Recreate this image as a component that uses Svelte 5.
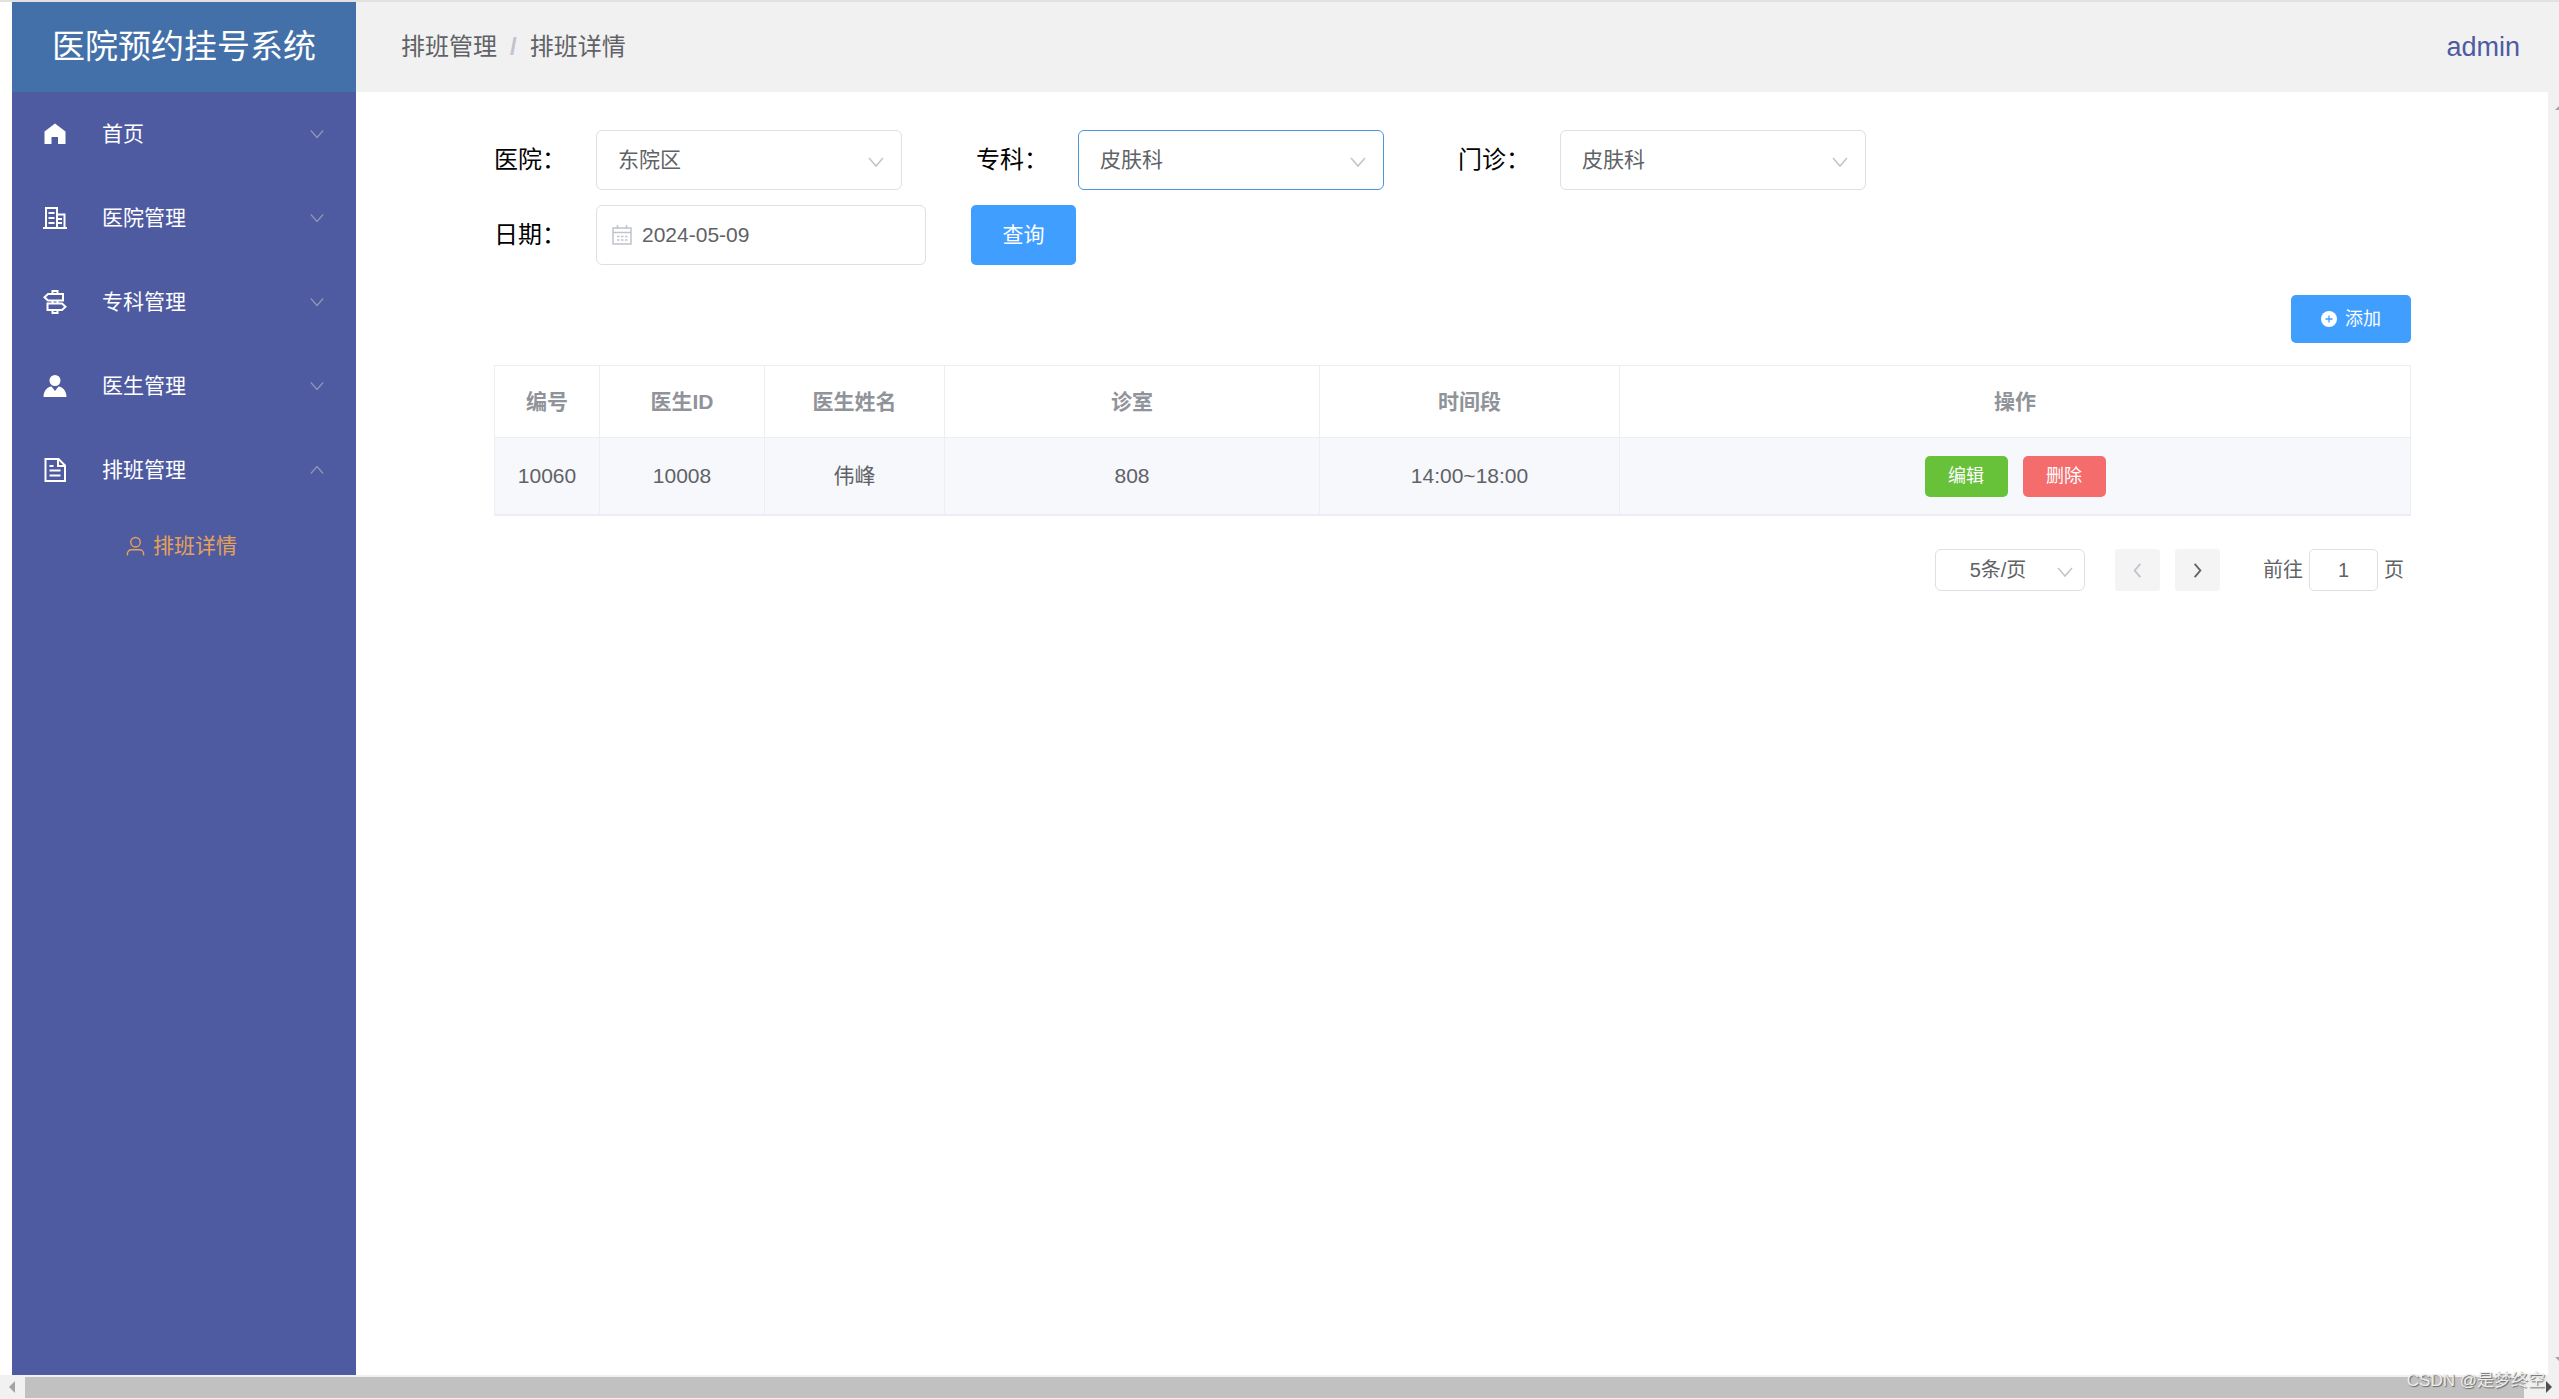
<script>
  const menus = [
    { name: '首页', icon: 'home', open: false },
    { name: '医院管理', icon: 'building', open: false },
    { name: '专科管理', icon: 'guide', open: false },
    { name: '医生管理', icon: 'doctor', open: false },
    { name: '排班管理', icon: 'doc', open: true, children: ['排班详情'] }
  ];

  let filters = $state([
    { id: 'hospital', label: '医院：', value: '东院区', options: ['东院区', '西院区'], active: false },
    { id: 'major', label: '专科：', value: '皮肤科', options: ['皮肤科', '内科'], active: true },
    { id: 'clinic', label: '门诊：', value: '皮肤科', options: ['皮肤科', '内科'], active: false }
  ]);

  let date = $state('2024-05-09');
  let page = $state('1');

  const rows = [
    { id: 10060, doctorId: 10008, name: '伟峰', room: '808', time: '14:00~18:00' }
  ];
</script>

{#snippet chevron(cls)}
  <svg class={cls} viewBox="0 0 16 16" aria-hidden="true">
    <path d="M1 4l7 8 7-8" fill="none" stroke="currentColor" stroke-width="1.5" />
  </svg>
{/snippet}

{#snippet menuIcon(name)}
  <svg class="menu-icon" viewBox="0 0 24 24" aria-hidden="true">
    {#if name === 'home'}
      <path d="M12 1.500L1.500 9.500V22H8.500V15h6.500V22h7.500V9.500z" fill="currentColor" />
    {:else if name === 'building'}
      <path d="M3 22V2h11v20M14 8.500h7.500V22M0 22h24M5.500 7h6M5.500 12h6M5.500 17h6M15 13h4M15 17h4" fill="none" stroke="currentColor" stroke-width="2" />
    {:else if name === 'guide'}
      <path d="M9.500 4V1h5v3M5 4h15v6.500H5L1.500 7.200zM9.500 10.500v3M14.500 10.500v3M4.500 13.500h14.500l3.500 3.300L19 20H4.500zM9.500 20v3h5v-3" fill="none" stroke="currentColor" stroke-width="2" />
    {:else if name === 'doctor'}
      <circle cx="12" cy="6.500" r="5.500" fill="currentColor" />
      <path d="M.500 23c0-6 3.500-10 8-10.500L12 17l3.500-4.500c4.500.500 8 4.500 8 10.500z" fill="currentColor" />
    {:else}
      <path d="M2.500 1h13L22 7.500V23H2.500zM15 1v7h7M6.500 8h4M6.500 12.500h11M6.500 17.500h11" fill="none" stroke="currentColor" stroke-width="2" />
    {/if}
  </svg>
{/snippet}

<div class="layout">
  <aside class="sidebar">
    <h1 class="logo">医院预约挂号系统</h1>
    <nav>
      {#each menus as menu}
        <button class="menu-item" aria-expanded={menu.open}>
          {@render menuIcon(menu.icon)}
          <span>{menu.name}</span>
          {@render chevron(menu.open ? 'menu-arrow up' : 'menu-arrow')}
        </button>
        {#if menu.children}
          {#each menu.children as child}
            <a class="sub-item" href="#detail">
              <svg class="sub-icon" viewBox="0 0 20 20" aria-hidden="true">
                <circle cx="10" cy="6" r="5" fill="none" stroke="currentColor" stroke-width="1.500" />
                <path d="M1.500 20v-2a4 4 0 0 1 4-4h9a4 4 0 0 1 4 4v2" fill="none" stroke="currentColor" stroke-width="1.500" />
              </svg>
              {child}
            </a>
          {/each}
        {/if}
      {/each}
    </nav>
  </aside>

  <header class="header">
    <nav class="breadcrumb">
      <span>排班管理</span>
      <span class="sep">/</span>
      <span>排班详情</span>
    </nav>
    <a class="user" href="#user">admin</a>
  </header>

  <main class="main">
    <form class="filters" onsubmit={(e) => e.preventDefault()}>
      <div class="filter-row">
        {#each filters as f}
          <div class="field">
            <label for={f.id}>{f.label}</label>
            <div class="select" class:active={f.active}>
              <select id={f.id} bind:value={f.value}>
                {#each f.options as o}
                  <option>{o}</option>
                {/each}
              </select>
              {@render chevron('select-arrow')}
            </div>
          </div>
        {/each}
      </div>
      <div class="filter-row">
        <div class="field">
          <label for="date">日期：</label>
          <div class="date">
            <svg class="date-icon" viewBox="0 0 20 20" aria-hidden="true">
              <path d="M1 3h18v16H1zM1 7.500h18M5.500 0v4M14.500 0v4M5 11.500h2.500M9 11.500h2.500M13 11.500h2.500M5 15h2.500M9 15h2.500M13 15h2.500" fill="none" stroke="currentColor" stroke-width="1.500" />
            </svg>
            <input id="date" type="text" bind:value={date} />
          </div>
        </div>
        <button class="btn primary query">查询</button>
      </div>
    </form>

    <div class="toolbar">
      <button class="btn primary add">
        <svg class="add-icon" viewBox="0 0 16 16" aria-hidden="true">
          <circle cx="8" cy="8" r="8" fill="#fff" />
          <path d="M8 4.500v7M4.500 8h7" stroke="#409eff" stroke-width="1.300" />
        </svg>
        添加
      </button>
    </div>

    <table>
      <colgroup>
        <col class="w-id" />
        <col class="w-doctor" />
        <col class="w-name" />
        <col class="w-room" />
        <col class="w-time" />
        <col />
      </colgroup>
      <thead>
        <tr>
          <th>编号</th>
          <th>医生ID</th>
          <th>医生姓名</th>
          <th>诊室</th>
          <th>时间段</th>
          <th>操作</th>
        </tr>
      </thead>
      <tbody>
        {#each rows as row}
          <tr>
            <td>{row.id}</td>
            <td>{row.doctorId}</td>
            <td>{row.name}</td>
            <td>{row.room}</td>
            <td>{row.time}</td>
            <td>
              <div class="actions">
                <button class="btn mini success">编辑</button>
                <button class="btn mini danger">删除</button>
              </div>
            </td>
          </tr>
        {/each}
      </tbody>
    </table>

    <div class="pagination">
      <div class="select size">
        <select aria-label="每页条数">
          <option>5条/页</option>
          <option>10条/页</option>
        </select>
        {@render chevron('select-arrow')}
      </div>
      <div class="pager">
        <button aria-label="上一页" disabled>
          <svg viewBox="0 0 16 16" aria-hidden="true"><path d="M11 1L5 8l6 7" fill="none" stroke="currentColor" stroke-width="2" /></svg>
        </button>
        <button aria-label="下一页">
          <svg viewBox="0 0 16 16" aria-hidden="true"><path d="M5 1l6 7-6 7" fill="none" stroke="currentColor" stroke-width="2" /></svg>
        </button>
      </div>
      <label class="jump">前往 <input type="text" bind:value={page} /> 页</label>
    </div>
  </main>

  <div class="scroll-y" aria-hidden="true">
    <svg viewBox="0 0 12 6"><path d="M0 6l6-6 6 6z" fill="#a3a3a3" /></svg>
    <svg viewBox="0 0 12 6"><path d="M0 0l6 6 6-6z" fill="#a3a3a3" /></svg>
  </div>

  <div class="scroll-x" aria-hidden="true">
    <svg viewBox="0 0 6 12"><path d="M6 0L0 6l6 6z" fill="#a3a3a3" /></svg>
    <div class="thumb"></div>
    <svg viewBox="0 0 6 12"><path d="M0 0l6 6-6 6z" fill="#505050" /></svg>
  </div>

  <div class="watermark">CSDN @是梦终空</div>
</div>

<style>
  :global(body) {
    background: #fff;
    overflow: hidden;
  }

  .layout {
    position: relative;
    display: grid;
    grid-template-columns: 344px 1fr 11px;
    grid-template-rows: 90px 1fr 24px;
    box-sizing: border-box;
    height: 100vh;
    padding-left: 12px;
    border-top: 2px solid #e1e1e1;
    font-family: "Liberation Sans", "Noto Sans CJK SC", sans-serif;
    font-size: 21px;
    line-height: 30px;
    color: #606266;
  }

  button,
  input,
  select {
    font: inherit;
    color: inherit;
    margin: 0;
  }

  button {
    border: 0;
    cursor: pointer;
  }

  a {
    text-decoration: none;
  }

  /* 侧边栏 */
  .sidebar {
    grid-row: 1 / 3;
    background: #4e5ba1;
    color: #fff;
  }

  .logo {
    margin: 0;
    height: 90px;
    line-height: 90px;
    background: #4370a8;
    font-size: 33px;
    font-weight: normal;
    text-align: center;
  }

  .menu-item {
    display: flex;
    align-items: center;
    width: 100%;
    height: 84px;
    padding: 0 32px 0 31px;
    background: none;
    text-align: left;
  }

  .menu-icon {
    width: 24px;
    height: 24px;
    margin-right: 35px;
  }

  .menu-arrow {
    width: 14px;
    height: 14px;
    margin-left: auto;
    color: #8f96b4;
  }

  .up {
    transform: rotate(180deg);
  }

  .sub-item {
    display: flex;
    align-items: center;
    gap: 8px;
    height: 68px;
    padding-left: 114px;
    color: #e6a158;
  }

  .sub-icon {
    width: 19px;
    height: 20px;
  }

  /* 顶部 */
  .header {
    grid-column: 2 / 4;
    display: flex;
    align-items: center;
    justify-content: space-between;
    padding: 0 39px 0 45px;
    background: #f1f1f1;
  }

  .breadcrumb {
    display: flex;
    font-size: 24px;
  }

  .sep {
    margin: 0 13px;
    color: #c0c4cc;
    font-weight: bold;
  }

  .user {
    font-size: 27px;
    color: #4e5ba1;
  }

  /* 内容 */
  .main {
    padding: 38px 137px 0 138px;
    overflow: hidden;
  }

  .filters {
    display: flex;
    flex-direction: column;
    gap: 15px;
  }

  .filter-row {
    display: flex;
    gap: 74px;
  }

  .filter-row:last-child {
    gap: 45px;
  }

  .field {
    display: flex;
    align-items: center;
  }

  .field label {
    width: 102px;
    font-size: 24px;
    color: #000;
  }

  .select {
    position: relative;
    width: 306px;
    height: 60px;
  }

  .select select {
    width: 100%;
    height: 100%;
    padding: 0 21px;
    border: 1px solid #dcdfe6;
    border-radius: 6px;
    background: #fff;
    appearance: none;
    outline: none;
  }

  .active select {
    border-color: #4b96dc;
  }

  .select-arrow {
    position: absolute;
    top: 50%;
    right: 18px;
    width: 16px;
    height: 16px;
    margin-top: -6px;
    color: #c0c4cc;
    pointer-events: none;
  }

  .date {
    display: flex;
    align-items: center;
    gap: 10px;
    box-sizing: border-box;
    width: 330px;
    height: 60px;
    padding: 0 15px;
    border: 1px solid #dcdfe6;
    border-radius: 6px;
  }

  .date-icon {
    width: 20px;
    height: 20px;
    color: #c0c4cc;
  }

  .date input {
    flex: 1;
    min-width: 0;
    padding: 0;
    border: 0;
    outline: none;
  }

  .btn {
    padding: 0;
    border-radius: 5px;
    color: #fff;
  }

  .primary {
    background: #409eff;
  }

  .success {
    background: #67c23a;
  }

  .danger {
    background: #f56c6c;
  }

  .query {
    width: 105px;
    height: 60px;
  }

  .toolbar {
    display: flex;
    justify-content: flex-end;
    margin: 30px 0 22px;
  }

  .add {
    display: flex;
    align-items: center;
    justify-content: center;
    gap: 8px;
    width: 120px;
    height: 48px;
    font-size: 18px;
  }

  .add-icon {
    width: 16px;
    height: 16px;
  }

  table {
    width: 100%;
    table-layout: fixed;
    border-collapse: collapse;
    border-bottom: 2px solid #ebeef5;
    text-align: center;
  }

  .w-id {
    width: 105px;
  }

  .w-doctor {
    width: 165px;
  }

  .w-name {
    width: 180px;
  }

  .w-room {
    width: 375px;
  }

  .w-time {
    width: 300px;
  }

  th,
  td {
    height: 71px;
    padding: 0;
    border: 1px solid #ebeef5;
  }

  th {
    color: #909399;
  }

  td {
    height: 76px;
    background: #f6f8fc;
  }

  .actions {
    display: flex;
    justify-content: center;
    gap: 15px;
  }

  .mini {
    width: 83px;
    height: 41px;
    font-size: 18px;
  }

  .pagination {
    display: flex;
    align-items: center;
    justify-content: flex-end;
    margin-top: 33px;
    padding-right: 7px;
    font-size: 20px;
  }

  .size {
    width: 150px;
    height: 42px;
    margin-right: 30px;
  }

  .size select {
    padding: 0 24px 0 0;
    text-align: center;
    text-align-last: center;
  }

  .size .select-arrow {
    right: 12px;
  }

  .pager {
    display: flex;
    gap: 15px;
    margin-right: 43px;
  }

  .pager button {
    display: flex;
    align-items: center;
    justify-content: center;
    width: 45px;
    height: 42px;
    border-radius: 3px;
    background: #f4f4f5;
  }

  .pager button:disabled {
    color: #c0c4cc;
  }

  .pager svg {
    width: 15px;
    height: 15px;
  }

  .jump {
    display: flex;
    align-items: center;
    gap: 6px;
  }

  .jump input {
    box-sizing: border-box;
    width: 69px;
    height: 42px;
    padding: 0;
    border: 1px solid #dcdfe6;
    border-radius: 5px;
    text-align: center;
  }

  /* 滚动条 */
  .scroll-y {
    display: flex;
    flex-direction: column;
    justify-content: space-between;
    padding: 12px 0 12px 7px;
    background: #f1f1f1;
    overflow: hidden;
  }

  .scroll-y svg {
    flex: none;
    width: 12px;
    height: 6px;
  }

  .scroll-x {
    grid-column: 1 / 4;
    display: flex;
    align-items: center;
    gap: 10px;
    margin-left: -12px;
    padding: 0 7px 0 9px;
    background: #f1f1f1;
  }

  .scroll-x svg {
    width: 6px;
    height: 12px;
  }

  .thumb {
    flex: 1;
    height: 21px;
    margin-right: 12px;
    background: #c1c1c1;
  }

  .watermark {
    position: absolute;
    right: 14px;
    bottom: 3px;
    font-size: 17px;
    color: #eee;
    text-shadow: 1px 1px 1px #666;
  }
</style>
